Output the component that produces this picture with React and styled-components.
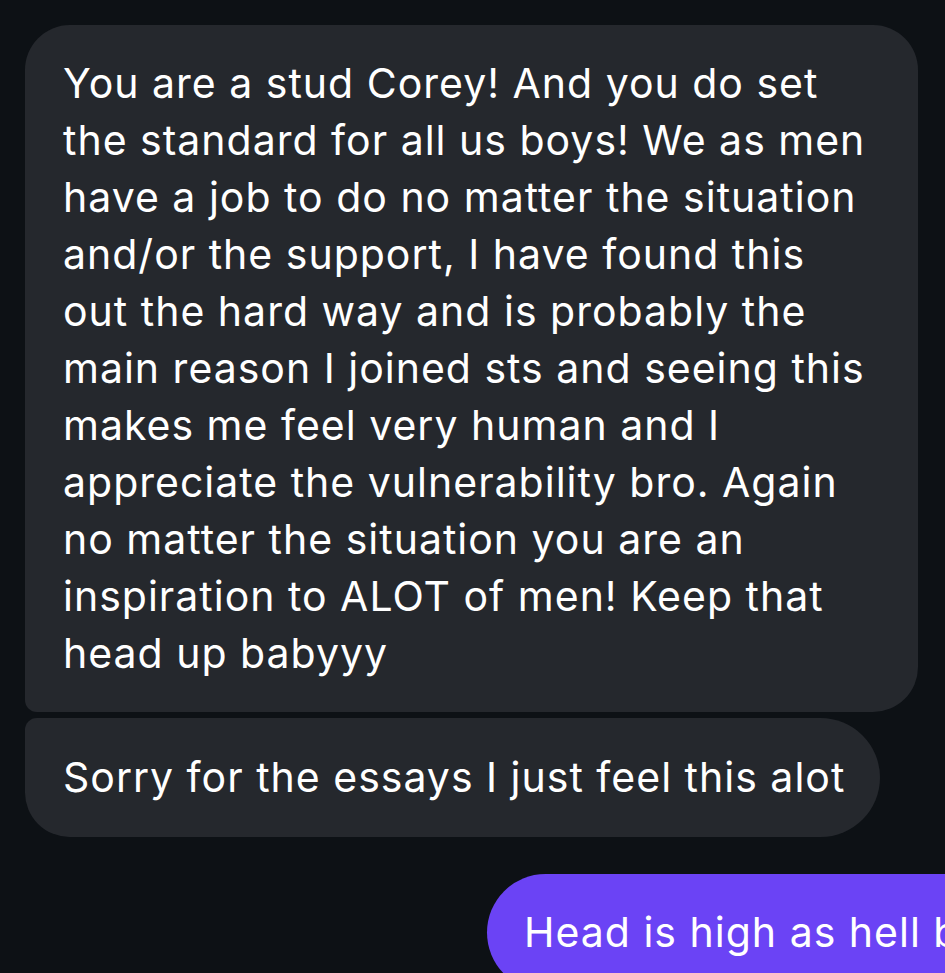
import React from 'react';
import styled, { createGlobalStyle } from 'styled-components';

const GlobalStyle = createGlobalStyle`
  html, body {
    margin: 0;
    padding: 0;
    background: #0d1115;
    overflow: hidden;
  }
`;

const Thread = styled.div`
  width: 945px;
  height: 973px;
  overflow: hidden;
  background: #0d1115;
  padding-top: 25px;
  box-sizing: border-box;
  display: flex;
  flex-direction: column;
  font-family: Inter, "Liberation Sans", sans-serif;
  color: #ffffff;
`;

const Group = styled.div`
  display: flex;
  flex-direction: column;
  gap: 6px;
  padding-left: 25px;
`;

const Bubble = styled.div`
  box-sizing: border-box;
  width: ${({ width }) => width}px;
  background: #25282d;
  padding: ${({ pad }) => pad}px 30px ${({ pad }) => pad}px 38px;
  font-size: 41px;
  letter-spacing: 1px;
  line-height: 57px;
  white-space: nowrap;
  border-radius: ${({ corners }) => corners};
`;

const Outgoing = styled.div`
  align-self: flex-start;
  margin-top: 37px;
  margin-left: 487px;
  background: #6b43f5;
  padding: 30px 37px;
  font-size: 41px;
  letter-spacing: 1px;
  line-height: 57px;
  white-space: nowrap;
  border-radius: 60px;
`;

const lines = [
  'You are a stud Corey! And you do set',
  'the standard for all us boys! We as men',
  'have a job to do no matter the situation',
  'and/or the support, I have found this',
  'out the hard way and is probably the',
  'main reason I joined sts and seeing this',
  'makes me feel very human and I',
  'appreciate the vulnerability bro. Again',
  'no matter the situation you are an',
  'inspiration to ALOT of men! Keep that',
  'head up babyyy',
];

const App = () => (
  <>
    <GlobalStyle />
    <Thread>
      <Group>
        <Bubble width={893} pad={30} corners="45px 45px 45px 12px">
          {lines.map((line, i) => (
            <div key={i}>{line}</div>
          ))}
        </Bubble>
        <Bubble width={855} pad={31} corners="12px 60px 60px 45px">
          Sorry for the essays I just feel this alot
        </Bubble>
      </Group>
      <Outgoing>Head is high as hell bro</Outgoing>
    </Thread>
  </>
);

export default App;
